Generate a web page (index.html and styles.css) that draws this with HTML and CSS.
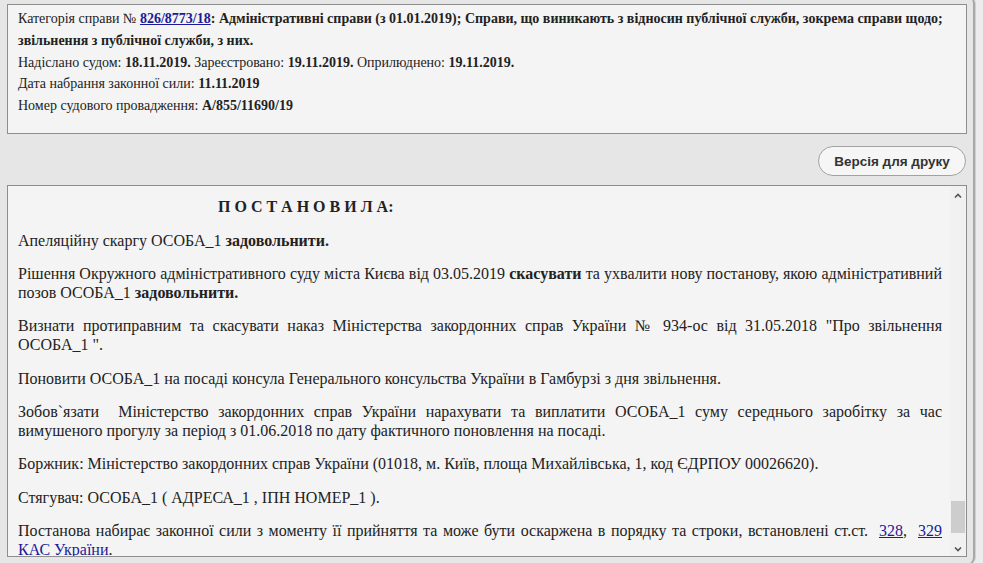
FILE: index.html
```html
<!DOCTYPE html>
<html lang="uk">
<head>
<meta charset="utf-8">
<title>Постанова</title>
<link rel="stylesheet" href="styles.css">
</head>
<body>
<div class="frame">
  <div class="info">
    <div class="line cat">Категорія справи № <a href="#" class="num">826/8773/18</a><b>: Адміністративні справи (з 01.01.2019); Справи, що виникають з відносин публічної служби, зокрема справи щодо; звільнення з публічної служби, з них.</b></div>
    <div class="line">Надіслано судом: <b>18.11.2019.</b> Зареєстровано: <b>19.11.2019.</b> Оприлюднено: <b>19.11.2019.</b></div>
    <div class="line">Дата набрання законної сили: <b>11.11.2019</b></div>
    <div class="line">Номер судового провадження: <b>А/855/11690/19</b></div>
  </div>
  <div class="toolbar">
    <button class="print">Версія для друку</button>
  </div>
  <div class="doc">
    <div class="text">
      <p class="title">П О С Т А Н О В И Л А:</p>
      <p>Апеляційну скаргу ОСОБА_1 <b>задовольнити.</b></p>
      <p>Рішення Окружного адміністративного суду міста Києва від 03.05.2019 <b>скасувати</b> та ухвалити нову постанову, якою адміністративний позов ОСОБА_1 <b>задовольнити.</b></p>
      <p>Визнати протиправним та скасувати наказ Міністерства закордонних справ України № 934-ос від 31.05.2018 "Про звільнення ОСОБА_1 ".</p>
      <p>Поновити ОСОБА_1 на посаді консула Генерального консульства України в Гамбурзі з дня звільнення.</p>
      <p>Зобов`язати &nbsp;Міністерство закордонних справ України нарахувати та виплатити ОСОБА_1 суму середнього заробітку за час вимушеного прогулу за період з 01.06.2018 по дату фактичного поновлення на посаді.</p>
      <p>Боржник: Міністерство закордонних справ України (01018, м. Київ, площа Михайлівська, 1, код ЄДРПОУ 00026620).</p>
      <p>Стягувач: ОСОБА_1 ( АДРЕСА_1 , ІПН НОМЕР_1 ).</p>
      <p>Постанова набирає законної сили з моменту її прийняття та може бути оскаржена в порядку та строки, встановлені ст.ст. &nbsp;<a href="#">328</a>, &nbsp;<a href="#">329</a> <a href="#">КАС України</a>.</p>
    </div>
    <div class="scrollbar">
      <div class="arrow up"><svg width="8" height="5" viewBox="0 0 8 5"><path d="M1 4.5 L4 1.5 L7 4.5" fill="none" stroke="#555" stroke-width="1.6"/></svg></div>
      <div class="track"><div class="thumb"></div></div>
      <div class="arrow down"><svg width="8" height="5" viewBox="0 0 8 5"><path d="M1 0.5 L4 3.5 L7 0.5" fill="none" stroke="#555" stroke-width="1.6"/></svg></div>
    </div>
  </div>
</div>
</body>
</html>
```
FILE: styles.css
```css
html, body {
  margin: 0;
  padding: 0;
  background: #ececec;
  height: 100%;
  overflow: hidden;
}
body {
  font-family: "Liberation Serif", "Times New Roman", serif;
  color: #222;
}
.frame {
  width: 966px;
  height: 560px;
  margin-top: -4px;
  padding: 8px 0 0 7px;
  box-sizing: content-box;
  background: #e6e6e6;
  border-right: 2px solid #a8a8a8;
  border-bottom: 1px solid #b8b8b8;
  border-radius: 0 8px 8px 0;
  box-shadow: 1px 0 0 #d0d0d0;
  display: flex;
  flex-direction: column;
}
.info {
  width: 960px;
  height: 130px;
  flex: none;
  box-sizing: border-box;
  background: #f4f4f4;
  border: 1px solid #8e8e8e;
  padding: 3px 10px 0 10px;
  font-size: 14px;
  line-height: 21.75px;
}
.info b { font-weight: bold; }
.info .num {
  color: #1a1a99;
  font-weight: bold;
  text-decoration: underline;
}
.toolbar {
  width: 960px;
  height: 51px;
  flex: none;
  box-sizing: border-box;
  display: flex;
  justify-content: flex-end;
  align-items: flex-start;
  padding: 12px 1px 0 0;
}
.print {
  height: 30px;
  width: 148px;
  border: 1px solid #a2a2a2;
  border-radius: 15px;
  background: #f6f6f6;
  font-family: "Liberation Sans", Arial, sans-serif;
  font-weight: bold;
  font-size: 13.5px;
  color: #333;
  padding: 0;
}
.doc {
  width: 960px;
  height: 372px;
  flex: none;
  box-sizing: border-box;
  background: #f4f4f4;
  border: 1px solid #8e8e8e;
  display: flex;
  overflow: hidden;
}
.text {
  flex: 1;
  padding: 12px 8px 0 10px;
  font-size: 16px;
  line-height: 18.7px;
}
.text p {
  margin: 0 0 14.8px 0;
  text-align: justify;
}
.text .title {
  font-weight: bold;
  text-align: left;
  padding-left: 200px;
  margin-bottom: 15px;
}
.text a {
  color: #1a1a99;
  text-decoration: underline;
}
.scrollbar {
  width: 16px;
  flex: none;
  display: flex;
  flex-direction: column;
  background: #f1f1f1;
}
.arrow {
  height: 14px;
  display: flex;
  align-items: center;
  justify-content: center;
}
.arrow.up { padding-top: 2px; }
.track {
  flex: 1;
  display: flex;
  flex-direction: column;
  justify-content: flex-end;
  padding-bottom: 9px;
}
.thumb {
  height: 32px;
  margin: 0 1px;
  background: #cdcdcd;
}
```
